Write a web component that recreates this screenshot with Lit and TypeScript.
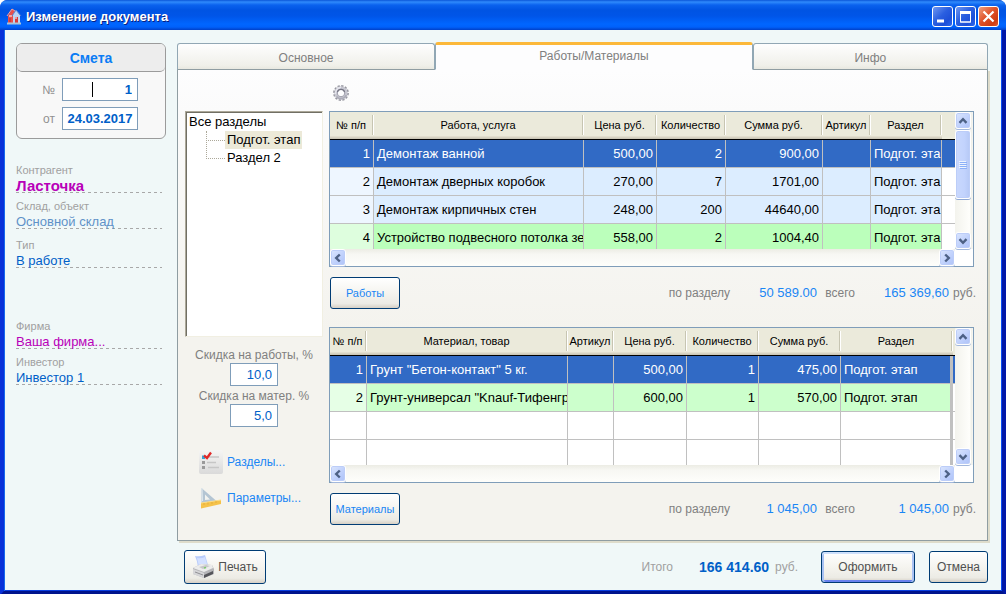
import { LitElement, html, svg, css, nothing } from "lit";
import { customElement, property, state } from "lit/decorators.js";
import { classMap } from "lit/directives/class-map.js";

interface Column {
  title: string;
  kind: "index" | "text" | "number" | "filler";
  size: string;
}

interface Row {
  tone: "blue" | "green" | "mint" | "blank";
  cells: string[];
}

const WORK_COLUMNS: Column[] = [
  { title: "№ п/п", kind: "index", size: "w44" },
  { title: "Работа, услуга", kind: "text", size: "auto" },
  { title: "Цена руб.", kind: "number", size: "w73" },
  { title: "Количество", kind: "number", size: "w69" },
  { title: "Сумма руб.", kind: "number", size: "w97" },
  { title: "Артикул", kind: "text", size: "w48" },
  { title: "Раздел", kind: "text", size: "w71" },
  { title: "", kind: "filler", size: "w13" },
];

const WORK_ROWS: Row[] = [
  { tone: "blue", cells: ["1", "Демонтаж ванной", "500,00", "2", "900,00", "", "Подгот. эта", ""] },
  { tone: "blue", cells: ["2", "Демонтаж дверных коробок", "270,00", "7", "1701,00", "", "Подгот. эта", ""] },
  { tone: "blue", cells: ["3", "Демонтаж кирпичных стен", "248,00", "200", "44640,00", "", "Подгот. эта", ""] },
  { tone: "green", cells: ["4", "Устройство подвесного потолка зе", "558,00", "2", "1004,40", "", "Подгот. эта", ""] },
];

const MATERIAL_COLUMNS: Column[] = [
  { title: "№ п/п", kind: "index", size: "w37" },
  { title: "Материал, товар", kind: "text", size: "auto" },
  { title: "Артикул", kind: "text", size: "w46" },
  { title: "Цена руб.", kind: "number", size: "w73" },
  { title: "Количество", kind: "number", size: "w72" },
  { title: "Сумма руб.", kind: "number", size: "w82" },
  { title: "Раздел", kind: "text", size: "w112" },
  { title: "", kind: "filler", size: "w2" },
];

const MATERIAL_ROWS: Row[] = [
  { tone: "mint", cells: ["1", "Грунт \"Бетон-контакт\" 5 кг.", "", "500,00", "1", "475,00", "Подгот. этап", ""] },
  { tone: "mint", cells: ["2", "Грунт-универсал \"Knauf-Тифенгр", "", "600,00", "1", "570,00", "Подгот. этап", ""] },
  { tone: "blank", cells: ["", "", "", "", "", "", "", ""] },
  { tone: "blank", cells: ["", "", "", "", "", "", "", ""] },
];

@customElement("estimate-grid")
export class EstimateGrid extends LitElement {
  @property({ attribute: false }) columns: Column[] = [];
  @property({ attribute: false }) rows: Row[] = [];
  @property() label = "";
  @property({ type: Boolean }) thumb = false;
  @property({ type: Boolean }) thick = false;
  @state() private selected = 0;

  static styles = css`
    :host { display: block; }
    .frame {
      display: grid;
      grid-template-columns: minmax(0, 1fr) 18px;
      grid-template-rows: 137px 17px;
      border: 1px solid #7f9db9;
      background: #fff;
    }
    .view { overflow: hidden; }
    table { width: 100%; table-layout: fixed; border-collapse: separate; border-spacing: 0; }
    th, td { box-sizing: border-box; height: 28px; overflow: hidden; white-space: nowrap; }
    th {
      padding: 0 2px 2px 0;
      border-bottom: 1px solid #000;
      background:
        linear-gradient(#c7c5b2, #c7c5b2) right 1px top 3px / 1px 20px no-repeat,
        linear-gradient(#fff, #fff) right 0 top 3px / 1px 20px no-repeat,
        linear-gradient(#ebeadb 24px, #e2dece 24px 25px, #d6d2c2 25px 26px, #cbc7b8 26px);
      font-size: 11px;
      font-weight: 400;
      text-align: center;
    }
    th.filler { padding: 0; background: #ebeadb; }
    td {
      padding: 0 3px;
      border-right: 1px solid #c0c0c0;
      border-bottom: 1px solid #c0c0c0;
      font-size: 13px;
    }
    td.text { padding-right: 0; }
    td.number, td.index { text-align: right; }
    td.filler { padding: 0; border-right: 0; }
    .thick td:nth-last-child(2) { border-right-width: 3px; }
    .blue td { background: #dcedff; }
    .blue td.index { background: #eef6ff; }
    .green td { background: #bbffbb; }
    .green td.index { background: #defede; }
    .mint td { background: #ccffcc; }
    .mint td.index { background: #e6ffe6; }
    td.filler.filler { background: #fff; }
    tr.selected td.index, tr.selected td.text, tr.selected td.number, tr.selected td.filler.filler {
      background: #316ac5;
      color: #fff;
    }
    .w2 { width: 2px; } .w13 { width: 13px; } .w37 { width: 37px; } .w44 { width: 44px; } .w46 { width: 46px; }
    .w48 { width: 48px; } .w69 { width: 69px; } .w71 { width: 71px; } .w72 { width: 72px; }
    .w73 { width: 73px; } .w82 { width: 82px; } .w97 { width: 97px; } .w112 { width: 112px; }
    .bar { display: flex; justify-content: space-between; }
    .vertical {
      flex-direction: column;
      padding-right: 2px;
      background: linear-gradient(90deg, #f3f3ed, #fefefb 80%, #eeede5 95%, #fff);
    }
    .horizontal { background: linear-gradient(#ecece4, #f7f7f3 30%, #fefefb); }
    .bar button {
      display: grid;
      place-items: center;
      box-sizing: border-box;
      width: 16px;
      height: 17px;
      padding: 0;
      border: 1px solid #fff;
      border-radius: 3px;
      background: linear-gradient(135deg, #dbe6fe, #b7cafb 75%, #b0c3f5);
      box-shadow: inset 0 0 0 1px #bccdf8, 0 1px 0 #a3b8dc;
    }
    .stack { display: flex; flex-direction: column; gap: 1px; }
    .thumb {
      display: grid;
      place-items: center;
      box-sizing: border-box;
      width: 16px;
      height: 69px;
      border: 1px solid #fff;
      border-radius: 3px;
      background: linear-gradient(90deg, #c9d8fd, #c2d3fd 60%, #b5c8f5);
      box-shadow: inset 0 0 0 1px #bccdf8, 0 1px 0 #8fa8d4;
    }
    svg { display: block; }
  `;

  private arrow(turn: number) {
    return html`<svg width="10" height="10" viewBox="-5 -5 10 10" aria-hidden="true">
      <path d="M-3.5 1.8L0-1.8L3.5 1.8" transform="rotate(${turn})" fill="none" stroke="#4d6185" stroke-width="2.4"></path>
    </svg>`;
  }

  render() {
    return html`
      <div class="frame">
        <div class="view">
          <table aria-label=${this.label} class=${classMap({ thick: this.thick })}>
            <thead>
              <tr>
                ${this.columns.map((c) => html`<th scope="col" class="${c.size} ${c.kind}">${c.title}</th>`)}
              </tr>
            </thead>
            <tbody>
              ${this.rows.map(
                (row, i) => html`<tr
                  class="${row.tone} ${i === this.selected ? "selected" : ""}"
                  @click=${() => (this.selected = i)}
                >
                  ${row.cells.map((cell, k) => html`<td class=${this.columns[k].kind}>${cell}</td>`)}
                </tr>`
              )}
            </tbody>
          </table>
        </div>
        <div class="bar vertical">
          <div class="stack">
            <button aria-label="Вверх">${this.arrow(0)}</button>
            ${this.thumb
              ? html`<div class="thumb">
                  <svg width="8" height="8" viewBox="0 0 8 8" aria-hidden="true">
                    <path d="M0 .5h7M0 2.5h7M0 4.5h7M0 6.5h7" stroke="#eef4fe"></path>
                    <path d="M1 1.5h7M1 3.5h7M1 5.5h7M1 7.5h7" stroke="#8cb0f8"></path>
                  </svg>
                </div>`
              : nothing}
          </div>
          <button aria-label="Вниз">${this.arrow(180)}</button>
        </div>
        <div class="bar horizontal">
          <button aria-label="Влево">${this.arrow(-90)}</button>
          <button aria-label="Вправо">${this.arrow(90)}</button>
        </div>
      </div>
    `;
  }
}

@customElement("app-root")
export class AppRoot extends LitElement {
  @state() private tab = 1;

  static styles = css`
    :host {
      display: block;
      font: 13px/16px "Liberation Sans", Arial, sans-serif;
      color: #000;
    }
    button, input { font: inherit; }
    button { cursor: default; }
    svg { display: block; flex: none; }
    a { color: inherit; text-decoration: none; }
    .window {
      display: flex;
      flex-direction: column;
      box-sizing: border-box;
      min-height: 100vh;
      border: solid #0a3ee0;
      border-width: 0 4px 4px;
      border-color: #0a3ee0 #0018a8 #00138c #0831d9;
      border-radius: 8px 8px 0 0;
      background: #f0f8f8;
      box-shadow: inset 1px 0 0 #166aee, inset -1px 0 0 #0a4df0, inset 0 -1px 0 #0a3ee0;
    }
    .titlebar {
      display: flex;
      align-items: center;
      gap: 4px;
      height: 30px;
      margin: 0 -4px;
      padding: 0 7px 0 6px;
      box-sizing: border-box;
      border-radius: 7px 7px 0 0;
      background: linear-gradient(#0a56d8 0, #2f8afc 2px, #0a62ee 5px, #0054e3 10px, #0055e8 16px, #0066ff 24px, #0061fb 27px, #0040c8 30px);
      color: #fff;
    }
    .titlebar h1 {
      flex: 1;
      margin: 0;
      padding-top: 4px;
      font-size: 13px;
      line-height: 16px;
      font-weight: 700;
      text-shadow: 1px 1px 0 #0a1f80;
    }
    .titlebar svg.logo { margin-top: 3px; }
    .controls { display: flex; gap: 2px; padding-top: 3px; }
    .controls button {
      display: grid;
      place-items: center;
      box-sizing: border-box;
      width: 21px;
      height: 21px;
      padding: 0;
      border: 1px solid #fff;
      border-radius: 3px;
      background: linear-gradient(135deg, #6f97f0, #2a5fe0 45%, #1d4fd8 75%, #2d6af0);
    }
    .controls .close { background: linear-gradient(135deg, #f0a080, #e0532b 45%, #cf3c12 80%, #e25a30); }
    .body {
      flex: 1;
      display: grid;
      grid-template-columns: 150px minmax(0, 1fr);
      gap: 11px;
      padding: 12px 14px 7px 12px;
    }
    .side { padding-top: 1px; }
    .doc {
      box-sizing: border-box;
      height: 96px;
      border: 1px solid #9b9b9b;
      border-radius: 6px;
      background: #f8f8f8;
    }
    .doc h2 {
      margin: 0;
      padding: 6px 0 4px;
      border-bottom: 1px solid #9b9b9b;
      border-radius: 5px;
      background: #ededed;
      color: #0a7cf5;
      font-size: 14px;
      line-height: 17px;
      text-align: center;
    }
    .line {
      position: relative;
      display: grid;
      grid-template-columns: 38px 76px;
      align-items: center;
      gap: 7px;
      margin-top: 6px;
      color: #909090;
    }
    .line label { font-size: 12px; text-align: right; }
    .caret { position: absolute; left: 75px; top: 4px; width: 1px; height: 15px; background: #000; }
    input {
      box-sizing: border-box;
      height: 23px;
      min-width: 0;
      margin: 0;
      padding: 0 5px;
      border: 1px solid #7f9db9;
      border-radius: 0;
      background: #fff;
      color: #0060c8;
      text-align: right;
      outline: 0;
    }
    .line input { font-weight: 700; }
    .line .date { padding: 0; text-align: center; }
    .fields { display: flex; flex-direction: column; gap: 6px; margin: 24px 4px 0 0; }
    .field {
      height: 30px;
      background: repeating-linear-gradient(90deg, #a8a8a8 0 3px, transparent 3px 6px) left bottom / 100% 1px no-repeat;
      line-height: 14px;
    }
    .field.type { margin-top: 3px; }
    .field.firm { margin-top: 45px; }
    .field span { display: block; font-size: 11px; color: #a0a0a0; }
    .field a { display: block; line-height: 18px; color: #0060c8; }
    .field a.strong { font-size: 15px; font-weight: 700; color: #b800b8; }
    .field a.pink { color: #b800b8; }
    .field a.soft { color: #5f92c8; }
    .main { display: flex; flex-direction: column; min-width: 0; }
    .tabs { display: flex; align-items: flex-end; height: 28px; }
    .tabs button {
      box-sizing: border-box;
      flex: 258 1 0;
      height: 27px;
      padding: 2px 0 0;
      border: 1px solid #91a7b4;
      border-bottom-color: #8f9da2;
      border-radius: 3px 3px 0 0;
      background: linear-gradient(#fefefe, #f0f0ea 85%, #e8e8e0);
      color: #808080;
      font-size: 12px;
      z-index: 1;
    }
    .tabs button:nth-child(2) { flex-grow: 318; }
    .tabs button:nth-child(3) { flex-grow: 235; }
    .tabs button.active {
      height: 28px;
      padding: 0 0 2px;
      border-top: 3px solid #ffc73c;
      border-bottom-color: #fdfdfe;
      background: linear-gradient(#e68b2c, #e68b2c) left top / 100% 1px no-repeat border-box, #fdfdfe;
      border-top-color: #fcb83a;
    }
    .panel {
      flex: 1;
      display: grid;
      grid-template-columns: 138px minmax(0, 1fr);
      align-content: start;
      column-gap: 6px;
      margin-top: -1px;
      padding: 0 13px 15px 7px;
      border: 1px solid #8f9da2;
      background: linear-gradient(#fdfdfe, #fbfbfb 40px, #f4f3ee 260px);
      box-shadow: 2px 2px 0 #dedccb;
    }
    .tools { height: 41px; grid-column: 2; }
    .tools button { display: block; margin: 15px 0 0 4px; padding: 0; border: 0; background: none; }
    .tree {
      box-sizing: border-box;
      height: 226px;
      margin: 0;
      padding: 1px;
      border: 1px solid;
      border-color: #aca899 #f1efe2 #f1efe2 #aca899;
      box-shadow: inset 1px 1px 0 #716f64;
      background: #fff;
      line-height: 18px;
      list-style: none;
    }
    .tree ul { margin: 0; padding: 0 0 0 19px; list-style: none; }
    .tree ul li { display: flex; align-items: flex-start; }
    .tree ul li::before {
      content: "";
      width: 19px;
      height: 10px;
      border: dotted #aca899;
      border-width: 0 0 1px 1px;
      box-sizing: border-box;
    }
    .tree ul li:last-child::before { height: 19px; margin-top: -9px; }
    .tree span { padding: 0 2px; }
    .tree .current { background: #ece9d8; }
    .discounts { display: flex; flex-direction: column; align-items: center; padding-top: 10px; color: #808080; }
    .discounts input { width: 48px; margin-bottom: 2px; }
    .discounts label { font-size: 12px; line-height: 16px; }
    .links { display: flex; flex-direction: column; gap: 12px; margin: 21px 0 0 14px; color: #1a86f5; font-size: 12px; }
    .links a { display: flex; align-items: center; gap: 4px; height: 24px; }
    .summary {
      display: grid;
      grid-template-columns: 70px minmax(0, 1fr) 87px 38px 94px 27px;
      align-items: center;
      padding: 10px 0 18px 1px;
      margin-right: -2px;
      color: #808080;
      font-size: 12px;
      text-align: right;
    }
    .summary:last-child { padding-bottom: 0; }
    .summary output { color: #1a86f5; font-size: 13px; }
    .push {
      display: flex;
      align-items: center;
      justify-content: center;
      box-sizing: border-box;
      height: 32px;
      padding: 0;
      border: 1px solid #003c74;
      border-radius: 3px;
      background: linear-gradient(#fff, #f5f4ef 50%, #ecebe5 85%, #d6d0c5);
      color: #505050;
    }
    .summary .push { font-size: 11px; color: #1a86f5; }
    .footer { display: flex; align-items: center; padding-top: 9px; color: #a0a0a0; font-size: 12px; }
    .print { gap: 3px; width: 82px; height: 34px; margin: 0 auto 0 7px; }
    .sum { margin: 0 6px 0 26px; color: #0060c8; font-size: 14px; font-weight: 700; }
    .ok { width: 94px; margin: 0 14px 0 23px; box-shadow: inset 0 2px 0 #cee0fc, inset 2px 0 0 #a9c2f3, inset -2px 0 0 #a9c2f3, inset 0 -2px 0 #6982ee; }
    .cancel { width: 59px; }
  `;

  private logo() {
    return svg`<svg class="logo" width="16" height="17" viewBox="0 0 16 17" aria-hidden="true">
      <path d="M2 8L6 1l4 3v12H2z" fill="#e8504c"/>
      <path d="M6 1L1 8M6 1l3 2" stroke="#f7a09a" fill="none"/>
      <path d="M7 6l3-4 4 5v8H7z" fill="#bcd4f4"/>
      <path d="M6 8l4-6 5 6" stroke="#5b7fd0" fill="none"/>
      <path d="M9 9h3v6H9zM3 10h2v4H3z" fill="#d83a3a"/>
      <path d="M9 10h2M3 8h3" stroke="#fff"/>
      <path d="M1 15.500h14" stroke="#a9c4d8" stroke-width="2"/>
    </svg>`;
  }

  private gear() {
    return svg`<svg width="16" height="16" viewBox="-8 -8 16 16" aria-hidden="true">
      <circle r="6.800" fill="none" stroke="#96969f" stroke-width="2.200" stroke-dasharray="2.200 1.360"/>
      <circle r="5.300" fill="none" stroke="#c6c6d0" stroke-width="2.800"/>
      <path d="M-5.300 1A5.400 5.400 0 0 1 0-5.400" stroke="#e6e6ee" stroke-width="1.500" fill="none"/>
      <path d="M-4.500 3.500A5.700 5.700 0 0 0 5.300 2" stroke="#acacb8" stroke-width="1.500" fill="none"/>
      <circle r="3.800" fill="#fdfdfe" stroke="#9a9aa8" stroke-width="1"/>
      <path d="M-3.600-1A3.800 3.800 0 0 1 3.600-1" stroke="#757584" stroke-width="1.200" fill="none"/>
    </svg>`;
  }

  private checklist() {
    return svg`<svg width="24" height="24" viewBox="0 0 24 24" aria-hidden="true">
      <defs><linearGradient id="sheet" x2="0" y2="1"><stop stop-color="#f5f5f4"/><stop offset="1" stop-color="#dadada"/></linearGradient></defs>
      <rect width="24" height="24" rx="2" fill="url(#sheet)"/>
      <path d="M10 7h10M8 12.500h9M9 17.500h11" stroke="#c6c6c6" stroke-width="1.600"/>
      <path d="M3 5.500h3v3.500H3z" fill="#35a6d8"/><path d="M3 11h3v3H3zM3 16h3v3H3z" fill="#9a9a9a"/>
      <path d="M5 5.500l3 2.500 4-5.500" fill="none" stroke="#e02a2a" stroke-width="2.300"/>
    </svg>`;
  }

  private triangle() {
    return svg`<svg width="24" height="24" viewBox="0 0 24 24" aria-hidden="true">
      <path d="M2.500 2v15l15-2z" fill="#b4c5d3"/>
      <path d="M6 8.500v5.500l5-.5z" fill="#f3f3ef"/>
      <path d="M3 2l.5 13" stroke="#dfe8ee"/>
      <path d="M2 17l20-3v4L2 22.500z" fill="#f5c24a"/>
      <path d="M2 17l20-3" stroke="#fbdc86"/>
      <path d="M5 17v2M9 16.500v2M13 16v2M17 15v2" stroke="#dba12e" stroke-width=".6"/>
    </svg>`;
  }

  private printer() {
    return svg`<svg width="23" height="24" viewBox="0 0 23 24" aria-hidden="true">
      <path d="M3 1q5 1 10-1l3 10-10 2Q5 5 3 1z" fill="#b9ccfa"/>
      <path d="M5 3q4 1 8-1l2 7-8 2z" fill="#d3e0ff"/>
      <path d="M1 13l8-4 11 1 2 4v5l-10 4-11-4z" fill="#b5b5b8"/>
      <path d="M1 13l8-4 11 1 1 3-9 4z" fill="#ececec"/>
      <path d="M7 12l7-2 4 1-7 3z" fill="#c6c6ca"/>
      <path d="M1 14l11 4v5L1 19z" fill="#d6d6d8"/>
      <path d="M12 20l9-4v3l-9 4z" fill="#55555a"/>
      <path d="M3 17l8 3" stroke="#909094"/>
      <path d="M12 13l2-.5" stroke="#77c96a" stroke-width="1.500"/>
    </svg>`;
  }

  render() {
    const tabs = ["Основное", "Работы/Материалы", "Инфо"];
    return html`
      <div class="window">
        <header class="titlebar">
          ${this.logo()}
          <h1>Изменение документа</h1>
          <div class="controls">
            <button aria-label="Свернуть"><svg width="13" height="13"><path d="M1 11h7" stroke="#fff" stroke-width="3"></path></svg></button>
            <button aria-label="Развернуть"><svg width="13" height="13"><path d="M1.500 1v11h10V1M1 12h11" fill="none" stroke="#fff"></path><path d="M1 2.500h11" stroke="#fff" stroke-width="3"></path></svg></button>
            <button class="close" aria-label="Закрыть"><svg width="13" height="13"><path d="M1.500 1.500l10 10M11.500 1.500l-10 10" stroke="#fff" stroke-width="2.200"></path></svg></button>
          </div>
        </header>
        <div class="body">
          <aside class="side">
            <section class="doc">
              <h2>Смета</h2>
              <div class="line">
                <label for="number">№</label><input id="number" value="1" /><i class="caret"></i>
              </div>
              <div class="line">
                <label for="date">от</label><input id="date" class="date" value="24.03.2017" />
              </div>
            </section>
            <div class="fields">
              <div class="field"><span>Контрагент</span><a class="strong" href="#">Ласточка</a></div>
              <div class="field"><span>Склад, объект</span><a class="soft" href="#">Основной склад</a></div>
              <div class="field type"><span>Тип</span><a href="#">В работе</a></div>
              <div class="field firm"><span>Фирма</span><a class="pink" href="#">Ваша фирма...</a></div>
              <div class="field"><span>Инвестор</span><a href="#">Инвестор 1</a></div>
            </div>
          </aside>
          <main class="main">
            <div class="tabs" role="tablist">
              ${tabs.map(
                (name, i) => html`<button
                  role="tab"
                  aria-selected=${i === this.tab ? "true" : "false"}
                  class=${classMap({ active: i === this.tab })}
                  @click=${() => (this.tab = i)}
                >${name}</button>`
              )}
            </div>
            <section class="panel">
              <div class="tools"><button aria-label="Настройка">${this.gear()}</button></div>
              <div class="left">
                <ul class="tree">
                  <li>
                    <span class="root">Все разделы</span>
                    <ul>
                      <li><span class="current">Подгот. этап</span></li>
                      <li><span>Раздел 2</span></li>
                    </ul>
                  </li>
                </ul>
                <div class="discounts">
                  <label for="works">Скидка на работы, %</label>
                  <input id="works" value="10,0" />
                  <label for="goods">Скидка на матер. %</label>
                  <input id="goods" value="5,0" />
                </div>
                <nav class="links">
                  <a href="#">${this.checklist()}Разделы...</a>
                  <a href="#">${this.triangle()}Параметры...</a>
                </nav>
              </div>
              <div class="right">
                <estimate-grid label="Работы" thumb .columns=${WORK_COLUMNS} .rows=${WORK_ROWS}></estimate-grid>
                <div class="summary">
                  <button class="push">Работы</button>
                  <span>по разделу</span><output>50 589.00</output>
                  <span>всего</span><output>165 369,60</output><span>руб.</span>
                </div>
                <estimate-grid label="Материалы" thick .columns=${MATERIAL_COLUMNS} .rows=${MATERIAL_ROWS}></estimate-grid>
                <div class="summary">
                  <button class="push">Материалы</button>
                  <span>по разделу</span><output>1 045,00</output>
                  <span>всего</span><output>1 045,00</output><span>руб.</span>
                </div>
              </div>
            </section>
            <footer class="footer">
              <button class="push print">${this.printer()}Печать</button>
              <span>Итого</span><output class="sum">166 414.60</output><span>руб.</span>
              <button class="push ok">Оформить</button>
              <button class="push cancel">Отмена</button>
            </footer>
          </main>
        </div>
      </div>
    `;
  }
}
